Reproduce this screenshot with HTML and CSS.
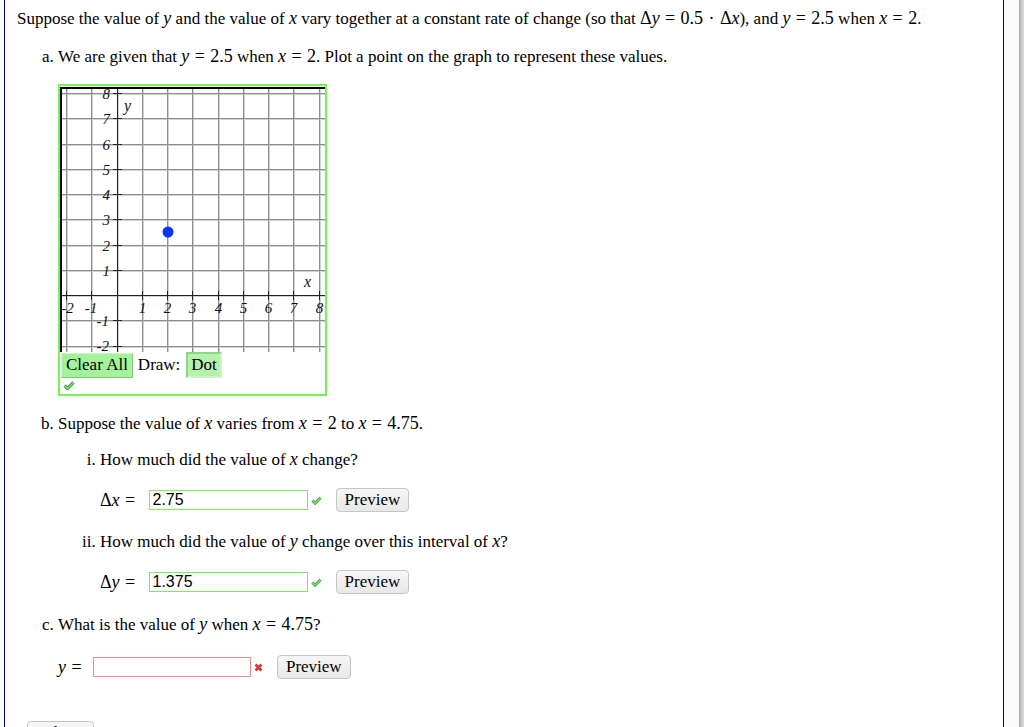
FILE: index.html
```html
<!DOCTYPE html>
<html lang="en">
<head>
  <meta charset="UTF-8">
  <title>Rate of Change</title>
  <link rel="stylesheet" href="styles.css">
</head>
<body>
  <div class="frame">
    <div class="page">
      <p class="intro">Suppose the value of <span class="m"><i>y</i></span> and the value of <span class="m"><i>x</i></span> vary together at a constant rate of change (so that <span class="m">Δ<i>y</i><span class="eq">=</span>0.5<span class="eq">·</span>Δ<i>x</i></span>), and <span class="m"><i>y</i><span class="eq">=</span>2.5</span> when <span class="m"><i>x</i><span class="eq">=</span>2</span>.</p>

      <ol class="parts">
        <li>
          <p>We are given that <span class="m"><i>y</i><span class="eq">=</span>2.5</span> when <span class="m"><i>x</i><span class="eq">=</span>2</span>. Plot a point on the graph to represent these values.</p>

          <div class="graph-box">
            <svg class="graph" width="265" height="265" viewBox="0 0 265 265">
              <!-- grid -->
              <path class="grid-soft" d="M7.5 0V265M32.5 0V265M58.5 0V265M83.5 0V265M108.5 0V265M133.5 0V265M159.5 0V265M184.5 0V265M209.5 0V265M234.5 0V265M260.5 0V265M0 7.5H265M0 32.5H265M0 58.5H265M0 83.5H265M0 108.5H265M0 133.5H265M0 159.5H265M0 184.5H265M0 209.5H265M0 234.5H265M0 260.5H265"/>
              <path class="grid" d="M6.5 0V265M31.5 0V265M82.5 0V265M107.5 0V265M132.5 0V265M158.5 0V265M183.5 0V265M208.5 0V265M233.5 0V265M259.5 0V265M0 6.5H265M0 31.5H265M0 57.5H265M0 82.5H265M0 107.5H265M0 132.5H265M0 158.5H265M0 183.5H265M0 233.5H265M0 259.5H265"/>
              <!-- axes and ticks -->
              <path class="axis" d="M57.5 0V265M0 208.5H265"/>
              <path class="axis" d="M53 6.5H62M53 31.5H62M53 57.5H62M53 82.5H62M53 107.5H62M53 132.5H62M53 158.5H62M53 183.5H62M53 233.5H62M53 259.5H62M6.5 204V213M31.5 204V213M82.5 204V213M107.5 204V213M132.5 204V213M158.5 204V213M183.5 204V213M208.5 204V213M233.5 204V213M259.5 204V213"/>
              <path class="edge" d="M1 265V1H265"/>
              <!-- labels -->
              <g class="ylabels">
                <text x="50" y="11.5">8</text>
                <text x="50" y="36.5">7</text>
                <text x="50" y="62.5">6</text>
                <text x="50" y="87.5">5</text>
                <text x="50" y="112.5">4</text>
                <text x="50" y="137.5">3</text>
                <text x="50" y="163.5">2</text>
                <text x="50" y="188.5">1</text>
                <text x="49" y="238.5">-1</text>
                <text x="49" y="263.5">-2</text>
              </g>
              <g class="xlabels">
                <text x="7.5" y="226">-2</text>
                <text x="31" y="226">-1</text>
                <text x="82.5" y="226">1</text>
                <text x="107.5" y="226">2</text>
                <text x="132.5" y="226">3</text>
                <text x="158.5" y="226">4</text>
                <text x="183.5" y="226">5</text>
                <text x="208.5" y="226">6</text>
                <text x="233.5" y="226">7</text>
                <text x="259.5" y="226">8</text>
              </g>
              <text class="axis-name" x="64" y="24">y</text>
              <text class="axis-name" x="244" y="200">x</text>
              <circle class="point" cx="108" cy="145" r="5.5"/>
            </svg>

            <div class="graph-tools">
              <button class="tool">Clear All</button>
              <span class="draw-label">Draw:</span>
              <button class="tool active">Dot</button>
            </div>
            <svg class="mark" width="12" height="9" viewBox="0 0 12 9">
              <path class="ok-outline" d="M1.5 4.5L4.5 7.5L10.5 1.5"/>
              <path class="ok-fill" d="M1.5 4.5L4.5 7.5L10.5 1.5"/>
            </svg>
          </div>
        </li>

        <li>
          <p>Suppose the value of <span class="m"><i>x</i></span> varies from <span class="m"><i>x</i><span class="eq">=</span>2</span> to <span class="m"><i>x</i><span class="eq">=</span>4.75</span>.</p>

          <ol class="sub">
            <li>
              <p>How much did the value of <span class="m"><i>x</i></span> change?</p>
              <div class="answer">
                <span class="m lhs">Δ<i>x</i><span class="eq">=</span></span>
                <input class="field correct" type="text" value="2.75">
                <svg class="mark" width="11" height="9" viewBox="0 0 12 9">
                  <path class="ok-outline" d="M1.5 4.5L4.5 7.5L10.5 1.5"/>
                  <path class="ok-fill" d="M1.5 4.5L4.5 7.5L10.5 1.5"/>
                </svg>
                <button class="preview">Preview</button>
              </div>
            </li>
            <li>
              <p>How much did the value of <span class="m"><i>y</i></span> change over this interval of <span class="m"><i>x</i></span>?</p>
              <div class="answer">
                <span class="m lhs">Δ<i>y</i><span class="eq">=</span></span>
                <input class="field correct" type="text" value="1.375">
                <svg class="mark" width="11" height="9" viewBox="0 0 12 9">
                  <path class="ok-outline" d="M1.5 4.5L4.5 7.5L10.5 1.5"/>
                  <path class="ok-fill" d="M1.5 4.5L4.5 7.5L10.5 1.5"/>
                </svg>
                <button class="preview">Preview</button>
              </div>
            </li>
          </ol>
        </li>

        <li class="last-part">
          <p>What is the value of <span class="m"><i>y</i></span> when <span class="m"><i>x</i><span class="eq">=</span>4.75</span>?</p>
          <div class="answer">
            <span class="m lhs"><i>y</i><span class="eq">=</span></span>
            <input class="field wrong" type="text" value="">
            <svg class="mark" width="11" height="9" viewBox="0 0 11 9">
              <path class="bad" d="M1.5 1.5L7.5 7.5M7.5 1.5L1.5 7.5"/>
            </svg>
            <button class="preview">Preview</button>
          </div>
        </li>
      </ol>

      <button class="preview submit">Submit</button>
    </div>
    <div class="gutter"></div>
  </div>
</body>
</html>
```

FILE: styles.css
```css
/* Page frame */
html, body {
  margin: 0;
  height: 100%;
}

body {
  font-family: "Liberation Serif", "Times New Roman", serif;
  font-size: 17px;
  color: #000;
  background: #fff;
  overflow: hidden;
}

.frame {
  display: flex;
  min-height: 100%;
}

.page {
  box-sizing: border-box;
  width: 1000px;
  margin-left: 4px;
  padding: 9px 12px 0;
  border-left: 1px solid #00007f;
  border-right: 1px solid #00007f;
}

.gutter {
  flex: 1;
  background: linear-gradient(to right, #fafafa 15px, #a3a3a3 15px, #c6c6c6 17px, #dedede 20px);
}

p {
  margin: 0;
  line-height: 20px;
}

/* Math bits */
.m {
  font-size: 18px;
  line-height: 1;
}

.m i {
  font-style: italic;
}

.eq {
  margin: 0 0.3em;
}

/* Question parts */
.parts {
  margin: 18px 0 0;
  padding-left: 41px;
  list-style: lower-alpha;
}

.parts > li + li {
  margin-top: 18px;
}

.parts > li.last-part {
  margin-top: 21px;
}

.last-part .answer {
  margin-top: 20px;
}

.last-part .field {
  width: 158px;
  margin-left: 6px;
}

.last-part .preview {
  margin-left: 12px;
}

.sub {
  margin: 16px 0 0;
  padding-left: 42px;
  list-style: lower-roman;
}

.sub > li + li {
  margin-top: 20px;
}

.answer {
  display: flex;
  align-items: center;
  height: 24px;
  margin-top: 18px;
}

.field {
  box-sizing: border-box;
  width: 159px;
  height: 20px;
  margin: 0 0 0 8px;
  padding: 0 3px;
  border: 1px solid #ccc;
  font-family: "Liberation Sans", Arial, sans-serif;
  font-size: 16px;
  color: #000;
  outline: none;
}

.field.correct {
  border-color: #7ceb5e;
}

.field.wrong {
  border-color: #ef8a8a;
}

.mark {
  display: block;
  margin-left: 3px;
}

.ok-outline {
  fill: none;
  stroke: #3f9f3f;
  stroke-width: 3.2;
}

.ok-fill {
  fill: none;
  stroke: #7fdc6f;
  stroke-width: 1.4;
}

.bad {
  fill: none;
  stroke: #d73232;
  stroke-width: 2.6;
}

.preview {
  box-sizing: border-box;
  height: 24px;
  margin-left: 14px;
  padding: 0 8px;
  border: 1px solid #c6c6c6;
  border-radius: 4px;
  background: linear-gradient(#f6f6f6, #e8e8e8);
  font-family: "Liberation Serif", "Times New Roman", serif;
  font-size: 17px;
  color: #000;
}

.submit {
  display: block;
  margin: 42px 0 0 10px;
}

/* Graph */
.graph-box {
  box-sizing: border-box;
  width: 269px;
  height: 312px;
  margin-top: 17px;
  padding-top: 1px;
  border: 2px solid #76f259;
}

.graph {
  display: block;
}

.grid {
  stroke: #8e8e8e;
  stroke-width: 1;
  fill: none;
}

.grid-soft {
  stroke: #d2d2d2;
  stroke-width: 1;
  fill: none;
}

.axis {
  stroke: #222;
  stroke-width: 1;
  fill: none;
}

.edge {
  stroke: #000;
  stroke-width: 2;
  fill: none;
}

.ylabels text,
.xlabels text,
.axis-name {
  font-family: "Liberation Serif", "Times New Roman", serif;
  font-style: italic;
  font-size: 15px;
  fill: #111;
}

.ylabels text {
  text-anchor: end;
}

.xlabels text {
  text-anchor: middle;
}

.axis-name {
  font-size: 16px;
}

.point {
  fill: #0635ff;
}

.graph-tools {
  display: flex;
  align-items: center;
  margin-left: 1px;
}

.tool {
  box-sizing: border-box;
  height: 25px;
  padding: 0 4px;
  border: 1px solid;
  border-color: #c8f7c2 #7fcd77 #7fcd77 #c8f7c2;
  background: #a4f29b;
  font-family: "Liberation Serif", "Times New Roman", serif;
  font-size: 17px;
  color: #000;
}

.tool.active {
  height: 26px;
  padding: 0 3px;
  border-width: 2px;
  border-color: #8fd488 #cdf5c8 #cdf5c8 #8fd488;
  background: #b6f1ae;
}

.draw-label {
  margin: 0 6px 0 5px;
}

.graph-box > .mark {
  margin: 3px 0 0 3px;
}
```
